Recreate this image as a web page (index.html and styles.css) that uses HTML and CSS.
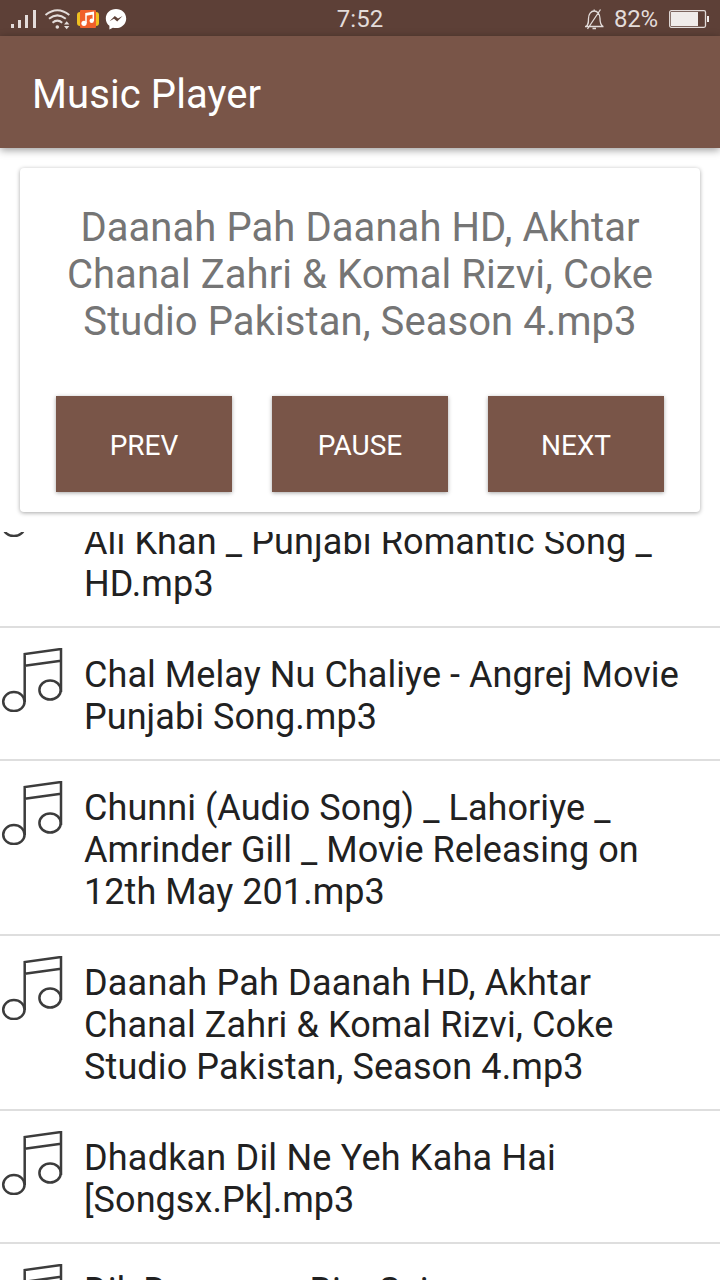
FILE: index.html
```html
<!DOCTYPE html>
<html lang="en">
<head>
<meta charset="utf-8">
<title>Music Player</title>
<link rel="stylesheet" href="styles.css">
</head>
<body>
<svg class="defs" width="0" height="0">
  <symbol id="note" viewBox="0 0 64 64">
    <g fill="none" stroke="#3c3c3c" stroke-width="2.500">
      <path d="M24.700 54V6L61 1V44M24.700 17.800L61 12.800"/>
      <ellipse cx="13.900" cy="53.600" rx="10.700" ry="9.500"/>
      <ellipse cx="50.100" cy="42" rx="10.700" ry="9.500"/>
    </g>
  </symbol>
</svg>
<div class="screen">
  <div class="status">
    <svg class="status-icons" width="140" height="36" viewBox="0 0 140 36">
      <g fill="#e3dcda">
        <path d="M11 23h3v4h-3zM18 19h3v8h-3zM25 14h3v13h-3zM33 9h3v18h-3z"/>
        <circle cx="57.300" cy="26" r="1.800"/>
        <path d="M64 23.500l2.700-3.200 2.700 3.200zM64 25l2.700 3.200 2.700-3.200z"/>
      </g>
      <path d="M45.500 14Q57.300 4.500 69.300 14M49 17.700Q57.300 11 65.800 17.700M52.500 21.700Q57.300 17.500 62.200 21.700" fill="none" stroke="#e3dcda" stroke-width="2"/>
      <rect x="77" y="11" width="22" height="14" rx="3" fill="#f0c020"/>
      <rect x="80" y="9" width="16" height="18" rx="1" fill="#f0602b"/>
      <path d="M86 22v-9.300l7.300-1.300v8.600M86 14l7.300-1.300" fill="none" stroke="#fff" stroke-width="1.500"/>
      <circle cx="84" cy="22.300" r="2.600" fill="#fff"/>
      <circle cx="91.700" cy="19.800" r="2.200" fill="#fff"/>
      <path d="M116 8c-5.800 0-10.200 4.100-10.200 9.400 0 3.100 1.400 5.700 3.600 7.400v3.800l3.500-1.900c1 .2 2 .4 3.100.4 5.800 0 10.200-4.300 10.200-9.700S121.800 8 116 8z" fill="#fff"/>
      <path d="M109.500 20.300l5.300-5.300 3.200 2.500 4.500-2.500-5.300 5.500-3.200-2.700z" fill="#5d4037"/>
    </svg>
    <span class="clock">7:52</span>
    <div class="power">
      <svg width="21" height="22" viewBox="0 0 21 22" fill="none" stroke="#e3dcda" stroke-width="1.300">
        <path d="M1 18.500h18.500M2 18.500c2.500-1.500 2.500-4 2.500-8 0-4.500 2.500-7.500 5.700-7.500s5.800 3 5.800 7.500c0 4 .5 6.500 3 8M10.200 3V1.500M8.500 20.500h3.500M3.500 21L16.500 1.500"/>
      </svg>
      <span class="percent">82%</span>
      <svg width="41" height="18" viewBox="0 0 41 18">
        <rect x=".7" y=".7" width="35.800" height="16.600" rx="1.500" fill="none" stroke="#e3dcda" stroke-width="1.300"/>
        <path d="M2 2h27v14H2zM38 6h2v6h-2z" fill="#f0ecea"/>
      </svg>
    </div>
  </div>
  <header class="bar">Music Player</header>
  <section class="player">
    <h1 class="now">Daanah Pah Daanah HD, Akhtar<br>Chanal Zahri &amp; Komal Rizvi, Coke<br>Studio Pakistan, Season 4.mp3</h1>
    <div class="buttons">
      <button class="btn">PREV</button>
      <button class="btn">PAUSE</button>
      <button class="btn">NEXT</button>
    </div>
  </section>
  <main class="viewport">
    <ul class="songs">
      <li class="song"><svg class="note"><use href="#note"/></svg><p class="name loose"><br>Ali Khan _ Punjabi Romantic Song _<br>HD.mp3</p></li>
      <li class="song"><svg class="note"><use href="#note"/></svg><p class="name">Chal Melay Nu Chaliye - Angrej Movie<br>Punjabi Song.mp3</p></li>
      <li class="song"><svg class="note"><use href="#note"/></svg><p class="name">Chunni (Audio Song) _ Lahoriye _<br>Amrinder Gill _ Movie Releasing on<br>12th May 201.mp3</p></li>
      <li class="song"><svg class="note"><use href="#note"/></svg><p class="name loose"><span class="looser">Daanah Pah Daanah HD, Akhtar</span><br>Chanal Zahri &amp; Komal Rizvi, Coke<br>Studio Pakistan, Season 4.mp3</p></li>
      <li class="song"><svg class="note"><use href="#note"/></svg><p class="name"><span class="looser">Dhadkan Dil Ne Yeh Kaha Hai</span><br>[Songsx.Pk].mp3</p></li>
      <li class="song"><svg class="note"><use href="#note"/></svg><p class="name">Dil&nbsp; Deewana&nbsp; Bin&nbsp; Sajna</p></li>
    </ul>
  </main>
</div>
</body>
</html>
```
FILE: styles.css
```css
* { box-sizing: border-box; }
body { margin: 0; font-family: Roboto, sans-serif; background: #fff; }
.defs { display: block; }
.screen { width: 720px; height: 1280px; display: flex; flex-direction: column; overflow: hidden; }
.status {
  height: 36px; flex: none; display: grid; grid-template-columns: 1fr auto 1fr;
  align-items: center; background: #5d4037; color: #e3dcda; font-size: 24px; line-height: 36px;
}
.status-icons { display: block; }
.clock { padding-top: 1px; }
.power { display: flex; align-items: center; justify-content: flex-end; padding-right: 10px; }
.percent { margin: 0 11px 0 9px; letter-spacing: -.2px; }
.bar {
  height: 112px; flex: none; padding: 3px 32px 0; background: #795548; color: #fff;
  font-size: 40px; line-height: 112px; letter-spacing: .1px; box-shadow: 0 2px 8px rgba(0, 0, 0, .4);
}
.player {
  height: 344px; flex: none; margin: 20px 20px 20px; padding: 36px 36px 20px;
  display: flex; flex-direction: column; justify-content: space-between;
  border-radius: 4px; background: #fff; box-shadow: 0 1px 4px rgba(0, 0, 0, .35);
}
.now { margin: 0; font-size: 40px; font-weight: 400; line-height: 47px; color: #757575; text-align: center; white-space: nowrap; letter-spacing: .07px; }
.buttons { display: flex; gap: 40px; }
.btn {
  flex: 1; height: 96px; padding: 3px 0 0; border: 0; background: #795548; color: #fff;
  font: 28px Roboto, sans-serif; box-shadow: 0 1px 4px rgba(0, 0, 0, .35);
}
.viewport { flex: 1; min-height: 0; overflow: hidden; }
.songs { list-style: none; margin: -79px 0 0; padding: 0; }
.song { display: flex; gap: 20px; padding: 20px 0 21px; border-bottom: 2px solid #dedede; }
.note { width: 64px; height: 64px; flex: none; }
.name { margin: 0; padding-top: 6px; font-size: 36px; line-height: 42px; color: #212121; white-space: nowrap; letter-spacing: .06px; }
.loose { letter-spacing: .12px; }
.looser { letter-spacing: .2px; }
```
